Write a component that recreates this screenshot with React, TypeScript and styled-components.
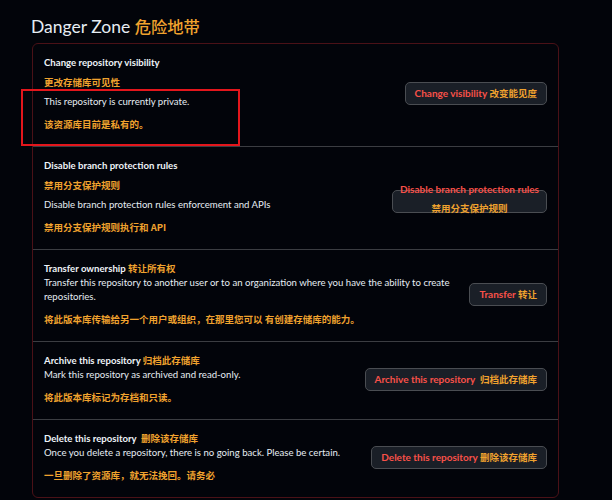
import React from "react";
import styled, { createGlobalStyle } from "styled-components";

const Global = createGlobalStyle`
  html, body { margin: 0; padding: 0; background: #02040a; }
  body {
    font-family: "Lato", "Noto Sans CJK SC", sans-serif;
    color: #e6edf3;
  }
`;

const Page = styled.div`
  width: 612px;
  height: 500px;
  box-sizing: border-box;
  padding: 14px 53px 0 31px;
  overflow: hidden;
`;

const Heading = styled.h2`
  margin: 0 0 5px 0;
  height: 24px;
  font-size: 17.5px;
  line-height: 25px;
  font-weight: 400;
  color: #e6edf3;
`;

const Cn = styled.span`
  color: #f0a22e;
  font-family: "Noto Sans CJK SC", sans-serif;
  font-size: 9.5px;
  line-height: 1;
  font-weight: 700;
`;

const HeadCn = styled(Cn)`
  font-size: 16.3px;
  font-weight: 500;
`;

const Box = styled.div`
  border: 1px solid #4a1117;
  border-radius: 6px;
  margin-left: 1px;
`;

const Row = styled.div`
  position: relative;
  display: flex;
  align-items: center;
  justify-content: space-between;
  padding: 12px 11px 15px 11px;
  border-top: 1px solid #3b3d42;
  &:first-child { border-top: none; }
`;

const Info = styled.div`
  flex: 1;
  min-width: 0;
  max-width: 420px;
  font-size: 9.6px;
  line-height: 14px;
`;

const Title = styled.div`
  font-weight: 700;
  color: #eef3f8;
`;

const Line = styled.div<{ $gap?: number }>`
  margin-top: ${(p) => p.$gap ?? 0}px;
  color: #e6edf3;
`;

const CnLine = styled.div<{ $gap?: number }>`
  margin-top: ${(p) => p.$gap ?? 8}px;
  color: #f0a22e;
  font-family: "Noto Sans CJK SC", sans-serif;
  font-size: 9.5px;
  font-weight: 700;
`;

const Button = styled.button<{ $stacked?: boolean; $w?: number }>`
  flex: none;
  box-sizing: border-box;
  height: 23px;
  ${(p) => (p.$w ? `width: ${p.$w}px;` : "")}
  margin-left: 16px;
  margin-top: ${(p) => (p.$stacked ? "10px" : "0")};
  padding: 0 9px;
  display: flex;
  flex-direction: column;
  align-items: center;
  justify-content: center;
  background: #1a1f27;
  border: 1px solid #4a4d52;
  border-radius: 5px;
  font-family: "Lato", "Noto Sans CJK SC", sans-serif;
  font-size: 10px;
  font-weight: 700;
  line-height: 19px;
  color: #f85149;
  white-space: nowrap;
  overflow: visible;
`;

const BtnStack = styled.span`
  display: block;
  padding-bottom: 6px;
  text-align: center;
`;

const Annotation = styled.div`
  position: absolute;
  left: -12px;
  top: 45px;
  width: 219px;
  height: 57px;
  box-sizing: border-box;
  border: 2px solid #e3161c;
  pointer-events: none;
`;

export default function App() {
  return (
    <>
      <Global />
      <Page>
        <Heading>
          Danger Zone <HeadCn>危险地带</HeadCn>
        </Heading>
        <Box>
          <Row>
            <Info>
              <Title>Change repository visibility</Title>
              <CnLine $gap={5}>更改存储库可见性</CnLine>
              <Line $gap={6}>This repository is currently private.</Line>
              <CnLine>该资源库目前是私有的。</CnLine>
            </Info>
            <Button>
              <span>
                Change visibility <Cn>改变能见度</Cn>
              </span>
            </Button>
            <Annotation />
          </Row>
          <Row>
            <Info>
              <Title>Disable branch protection rules</Title>
              <CnLine $gap={5}>禁用分支保护规则</CnLine>
              <Line $gap={6}>Disable branch protection rules enforcement and APIs</Line>
              <CnLine>禁用分支保护规则执行和 API</CnLine>
            </Info>
            <Button $stacked $w={155}>
              <BtnStack>
                Disable branch protection rules
                <br />
                <Cn>禁用分支保护规则</Cn>
              </BtnStack>
            </Button>
          </Row>
          <Row>
            <Info>
              <Title>
                Transfer ownership <Cn>转让所有权</Cn>
              </Title>
              <Line>
                Transfer this repository to another user or to an organization where you have the ability to create
                repositories.
              </Line>
              <CnLine>将此版本库传输给另一个用户或组织，在那里您可以 有创建存储库的能力。</CnLine>
            </Info>
            <Button>
              <span>
                Transfer <Cn>转让</Cn>
              </span>
            </Button>
          </Row>
          <Row>
            <Info>
              <Title>
                Archive this repository <Cn>归档此存储库</Cn>
              </Title>
              <Line>Mark this repository as archived and read-only.</Line>
              <CnLine>将此版本库标记为存档和只读。</CnLine>
            </Info>
            <Button>
              <span>
                Archive this repository&nbsp; <Cn>归档此存储库</Cn>
              </span>
            </Button>
          </Row>
          <Row>
            <Info>
              <Title>
                Delete this repository&nbsp; <Cn>删除该存储库</Cn>
              </Title>
              <Line>Once you delete a repository, there is no going back. Please be certain.</Line>
              <CnLine>一旦删除了资源库，就无法挽回。请务必</CnLine>
            </Info>
            <Button>
              <span>
                Delete this repository <Cn>删除该存储库</Cn>
              </span>
            </Button>
          </Row>
        </Box>
      </Page>
    </>
  );
}
